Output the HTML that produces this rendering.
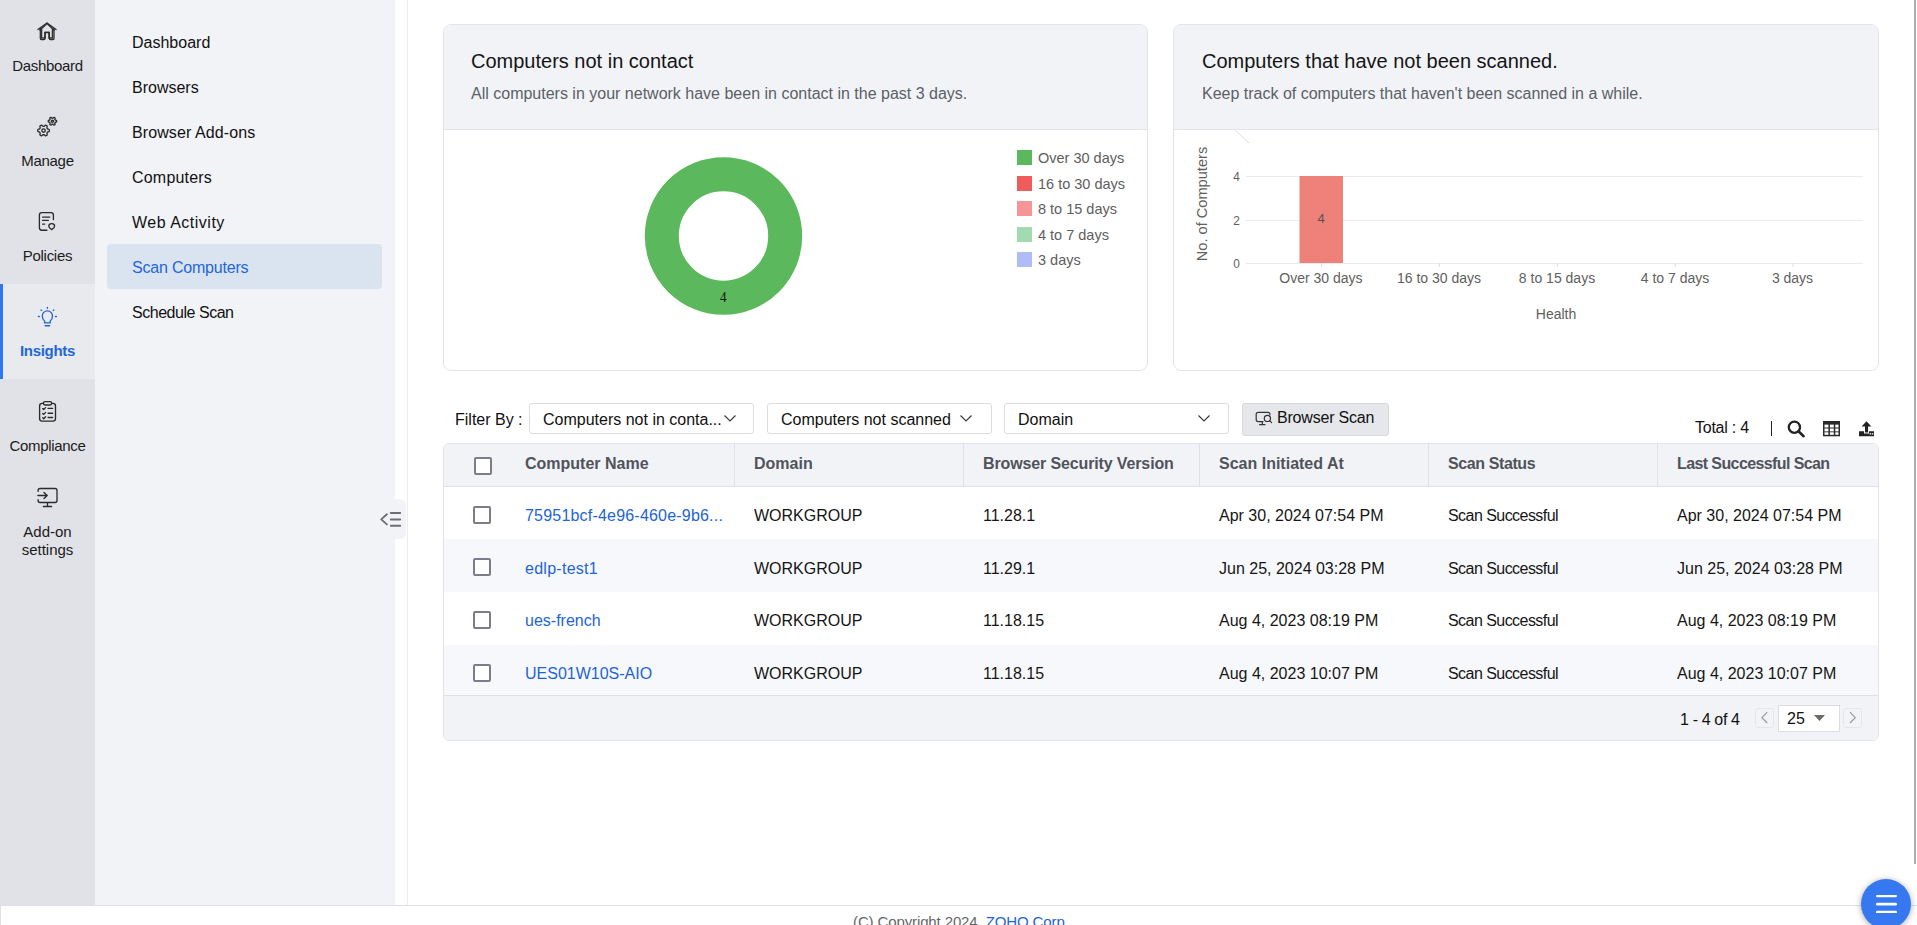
<!DOCTYPE html>
<html><head><meta charset="utf-8">
<style>
*{box-sizing:border-box;margin:0;padding:0}
html,body{width:1917px;height:925px;overflow:hidden;background:#fff;font-family:"Liberation Sans",sans-serif;color:#111}
.abs{position:absolute}
#rail{position:absolute;left:0;top:0;width:95px;height:905px;background:#e1e2e7}
.ri{position:absolute;left:0;width:95px;height:95px;text-align:center;font-size:15px;color:#1b1b1b}
.ri svg{position:absolute;left:37px;width:20px;height:20px}
.ri .lb{position:absolute;left:0;width:95px;text-align:center;line-height:18px;letter-spacing:-0.3px}
.ri.act{background:#e9eaee}
.ri.act:before{content:"";position:absolute;left:0;top:0;width:3px;height:95px;background:#2f76f0}
.ri.act .lb{color:#1f67d8;font-weight:bold}
#side{position:absolute;left:95px;top:0;width:300px;height:905px;background:#f2f3f7}
.mi{position:absolute;left:37px;font-size:16px;color:#111;line-height:20px}
#act{position:absolute;left:12px;top:244px;width:275px;height:45px;background:#dae4f0;border-radius:4px}
#vline{position:absolute;left:407px;top:0;width:1px;height:905px;background:#ececf0}
#collapse{position:absolute;left:379px;top:499px;width:27px;height:40px;background:#f2f3f7;border-radius:0 6px 6px 0}
.card{position:absolute;top:24px;height:347px;border:1px solid #e3e4e8;border-radius:8px;background:#fff;overflow:hidden}
.card .hd{position:absolute;left:0;top:0;right:0;height:105px;background:#f2f3f7;border-bottom:1px solid #e3e4e8}
.card .t{position:absolute;left:27px;top:25px;font-size:20px;color:#151515;white-space:nowrap}
.card .s{position:absolute;left:27px;top:60px;font-size:16px;color:#5b5f66;white-space:nowrap}
#footer{position:absolute;left:0;top:905px;width:1917px;height:20px;border-top:1px solid #dfe0e5;border-left:1px solid #dfe0e5;background:#fff}

.dd{position:absolute;top:403px;height:31px;border:1px solid #dcdde2;border-radius:3px;background:#fff;font-size:16px;color:#111;line-height:31px;padding-left:13px;white-space:nowrap}
.dd svg{position:absolute;top:9px}
#bscan{position:absolute;left:1242px;top:403px;width:147px;height:33px;background:#e6e7eb;border:1px solid #d6d7dc;border-radius:3px;font-size:16px;line-height:30px;color:#111}
#tbl{position:absolute;left:443px;top:443px;width:1436px;height:298px;border:1px solid #e3e4e8;border-radius:6px;overflow:hidden;background:#fff}
#th{position:absolute;left:0;top:0;width:100%;height:43px;background:#f2f3f7;border-bottom:1px solid #e0e1e6}
.hc{position:absolute;top:0;height:42px;line-height:40px;font-size:16px;font-weight:bold;color:#50535b;white-space:nowrap}
.cd{position:absolute;top:0;width:1px;height:42px;background:#e0e1e6}
.row{position:absolute;left:0;width:100%;height:53px}
.row.alt{background:#f7f8fb}
.c{position:absolute;top:2px;line-height:53px;font-size:16px;color:#151515;white-space:nowrap}
.c.lnk{color:#1d64d8}
.row.r2 .c{top:3px}
.cb{position:absolute;width:18px;height:18px;border:2px solid #7d7c8b;border-radius:2px;background:#fff}
#tf{position:absolute;left:0;top:251px;width:100%;height:45px;background:#f2f3f7;border-top:1px solid #e0e1e6}
</style></head><body>
<div id="rail">

  <div class="ri" style="top:0">
    <svg style="top:21px" viewBox="0 0 20 20" fill="none" stroke="#333" stroke-width="1.5"><path d="M2.5 9.5 L10 2.5 L17.5 9.5 M4.5 8 V17 H8 V11.5 H12 V17 H15.5 V8"/></svg>
    <div class="lb" style="top:57px">Dashboard</div>
  </div>
  <div class="ri" style="top:95px">
    <div class="lb" style="top:57px">Manage</div>
  </div>
  <div class="ri" style="top:190px">
    <div class="lb" style="top:57px">Policies</div>
  </div>
  <div class="ri act" style="top:284px">
    <div class="lb" style="top:58px">Insights</div>
  </div>
  <div class="ri" style="top:380px">
    <div class="lb" style="top:57px">Compliance</div>
  </div>
  <div class="ri" style="top:475px">
    <div class="lb" style="top:48px;letter-spacing:0">Add-on<br>settings</div>
  </div>
<svg class="abs" style="left:0;top:0" width="95" height="600" viewBox="0 0 95 600" fill="none" stroke="#2b2b2b" stroke-width="1.35" stroke-linecap="round" stroke-linejoin="round">
 <path stroke-width="1.25" d="M37.9 29.5 L47 22.9 L56.1 29.5 M40.3 28.2 V38.6 Q40.3 39.6 41.3 39.6 H44 Q45 39.6 45 38.6 V32.3 H49.4 V38.6 Q49.4 39.6 50.4 39.6 H53 Q54 39.6 54 38.6 V28.2"/>
 <path d="M49.35 130.50 L49.33 130.88 L49.25 131.25 L49.01 131.59 L48.38 131.79 L47.75 131.93 L47.48 132.13 L47.32 132.36 L47.19 132.60 L47.05 132.84 L46.92 133.09 L46.89 133.43 L47.09 134.04 L47.22 134.68 L47.05 135.06 L46.77 135.32 L46.45 135.52 L46.11 135.69 L45.75 135.81 L45.34 135.77 L44.84 135.33 L44.42 134.85 L44.10 134.71 L43.83 134.70 L43.55 134.70 L43.27 134.70 L43.00 134.71 L42.68 134.85 L42.26 135.33 L41.76 135.77 L41.35 135.81 L40.99 135.69 L40.65 135.52 L40.33 135.32 L40.05 135.06 L39.88 134.68 L40.01 134.04 L40.21 133.43 L40.18 133.09 L40.05 132.84 L39.91 132.60 L39.78 132.36 L39.62 132.13 L39.35 131.93 L38.72 131.79 L38.09 131.59 L37.85 131.25 L37.77 130.88 L37.75 130.50 L37.77 130.12 L37.85 129.75 L38.09 129.41 L38.72 129.21 L39.35 129.07 L39.62 128.87 L39.78 128.64 L39.91 128.40 L40.05 128.16 L40.18 127.91 L40.21 127.57 L40.01 126.96 L39.88 126.32 L40.05 125.94 L40.33 125.68 L40.65 125.48 L40.99 125.31 L41.35 125.19 L41.76 125.23 L42.26 125.67 L42.68 126.15 L43.00 126.29 L43.27 126.30 L43.55 126.30 L43.83 126.30 L44.10 126.29 L44.42 126.15 L44.84 125.67 L45.34 125.23 L45.75 125.19 L46.11 125.31 L46.45 125.48 L46.77 125.68 L47.05 125.94 L47.22 126.32 L47.09 126.96 L46.89 127.57 L46.92 127.91 L47.05 128.16 L47.19 128.40 L47.32 128.64 L47.48 128.87 L47.75 129.07 L48.38 129.21 L49.01 129.41 L49.25 129.75 L49.33 130.12Z"/><circle cx="43.55" cy="130.5" r="1.7"/>
 <path d="M56.65 121.20 L56.64 121.47 L56.58 121.74 L56.40 121.98 L55.93 122.13 L55.46 122.22 L55.26 122.36 L55.15 122.53 L55.05 122.70 L54.95 122.87 L54.86 123.05 L54.84 123.30 L55.00 123.75 L55.10 124.22 L54.98 124.50 L54.78 124.69 L54.55 124.84 L54.31 124.96 L54.04 125.05 L53.74 125.01 L53.38 124.68 L53.07 124.32 L52.85 124.21 L52.65 124.20 L52.45 124.20 L52.25 124.20 L52.05 124.21 L51.83 124.32 L51.52 124.68 L51.16 125.01 L50.86 125.05 L50.59 124.96 L50.35 124.84 L50.12 124.69 L49.92 124.50 L49.80 124.22 L49.90 123.75 L50.06 123.30 L50.04 123.05 L49.95 122.87 L49.85 122.70 L49.75 122.53 L49.64 122.36 L49.44 122.22 L48.97 122.13 L48.50 121.98 L48.32 121.74 L48.26 121.47 L48.25 121.20 L48.26 120.93 L48.32 120.66 L48.50 120.42 L48.97 120.27 L49.44 120.18 L49.64 120.04 L49.75 119.87 L49.85 119.70 L49.95 119.53 L50.04 119.35 L50.06 119.10 L49.90 118.65 L49.80 118.18 L49.92 117.90 L50.12 117.71 L50.35 117.56 L50.59 117.44 L50.86 117.35 L51.16 117.39 L51.52 117.72 L51.83 118.08 L52.05 118.19 L52.25 118.20 L52.45 118.20 L52.65 118.20 L52.85 118.19 L53.07 118.08 L53.38 117.72 L53.74 117.39 L54.04 117.35 L54.31 117.44 L54.55 117.56 L54.78 117.71 L54.98 117.90 L55.10 118.18 L55.00 118.65 L54.84 119.10 L54.86 119.35 L54.95 119.53 L55.05 119.70 L55.15 119.87 L55.26 120.04 L55.46 120.18 L55.93 120.27 L56.40 120.42 L56.58 120.66 L56.64 120.93Z"/><circle cx="52.45" cy="121.2" r="1.1"/>
 <path d="M53.4 219.6 V215 Q53.4 212.6 51 212.6 H41.8 Q39.4 212.6 39.4 215 V227.8 Q39.4 230.2 41.8 230.2 H46.9 M42.6 217.1 H49.8 M42.6 220.4 H48.3 M42.6 224.1 H44.7"/>
 <path d="M51.7 223.6 Q54.6 223.6 54.6 226 Q54.6 228 51.7 229.6 Q48.8 228 48.8 226 Q48.8 223.6 51.7 223.6Z"/>
 <g stroke="#2563d4"><path d="M44.6 322.9 V321 Q42.3 319.4 42.3 316 A5.1 5.1 0 0 1 52.5 316 Q52.5 319.4 50.2 321 V322.9 Z M45.2 325.7 H49.6 M47.4 307.4 V308.2 M38.4 316.5 H39.3 M55.5 316.5 H56.4 M41.0 310.0 L41.6 310.4 M53.9 310.0 L53.3 310.4"/></g>
 <rect x="39.6" y="403.3" width="15.9" height="17.8" rx="2.6"/><rect x="43.4" y="401.6" width="8.3" height="3.4" rx="1.7" fill="#e1e2e7"/>
 <path d="M42.7 408.6 L43.7 409.6 L45.6 407.6 M42.7 413.4 L43.7 414.4 L45.6 412.4 M42.7 417.7 L43.7 418.7 L45.6 416.7 M48.1 408.4 H52.6 M48.1 413.2 H52.6 M48.1 417.5 H52.6"/>
 <path d="M38.1 491.3 V490.5 Q38.1 488.5 40.1 488.5 H55 Q57 488.5 57 490.5 V500.5 Q57 502.5 55 502.5 H40.1 Q38.1 502.5 38.1 500.5 V499.7 M47.5 502.5 V506.5 M43.4 506.5 H51.6 M37.9 495.5 H47.2 M44 492.4 L47.2 495.5 L44 498.6"/>
</svg>
</div>
<div id="side">
  <div id="act"></div>
  <div class="mi" style="top:33px">Dashboard</div>
  <div class="mi" style="top:78px">Browsers</div>
  <div class="mi" style="top:123px;letter-spacing:0.1px">Browser Add-ons</div>
  <div class="mi" style="top:168px;letter-spacing:0.2px">Computers</div>
  <div class="mi" style="top:213px;letter-spacing:0.5px">Web Activity</div>
  <div class="mi" style="top:258px;color:#1f66dd;letter-spacing:-0.2px">Scan Computers</div>
  <div class="mi" style="top:303px;letter-spacing:-0.47px">Schedule Scan</div>
</div>
<div id="vline"></div>
<div id="collapse"><svg width="27" height="40" viewBox="0 0 27 40" fill="none" stroke="#6d6e75" stroke-width="1.9" stroke-linecap="round" stroke-linejoin="round"><path d="M7.9 15.3 L2.2 20.4 L7.9 25.4 M11.8 14 H21.2 M11.8 20.5 H21.2 M11.8 26.8 H21.2"/></svg></div>

<!-- CARDS -->
<div class="card" style="left:443px;width:705px">
  <div class="hd"><div class="t">Computers not in contact</div><div class="s">All computers in your network have been in contact in the past 3 days.</div></div>
</div>
<div class="card" style="left:1173px;width:706px">
  <div class="hd"><div class="t" style="left:28px">Computers that have not been scanned.</div><div class="s" style="left:28px">Keep track of computers that haven't been scanned in a while.</div></div>
</div>


<svg class="abs" style="left:443px;top:130px" width="705" height="240">
  <circle cx="280.5" cy="106" r="61.7" fill="none" stroke="#5cb85c" stroke-width="34"/>
  <text x="0" y="0" font-family="Liberation Serif" font-size="14.3" text-anchor="middle" fill="#111" transform="translate(280.2 171.8) scale(0.92 1)">4</text>
  <rect x="574" y="20" width="15" height="15" fill="#5cb85c"/>
  <rect x="574" y="46" width="15" height="15" fill="#f05b5b"/>
  <rect x="574" y="71" width="15" height="15" fill="#f59595"/>
  <rect x="574" y="97" width="15" height="15" fill="#a3dbb0"/>
  <rect x="574" y="122" width="15" height="15" fill="#b0bcf5"/>
  <g font-family="Liberation Sans" font-size="14.5" fill="#5e5e5e">
  <text x="595" y="32.5">Over 30 days</text>
  <text x="595" y="58.5">16 to 30 days</text>
  <text x="595" y="83.5">8 to 15 days</text>
  <text x="595" y="109.5">4 to 7 days</text>
  <text x="595" y="134.5">3 days</text>
  </g>
</svg>
<svg class="abs" style="left:1173px;top:130px" width="706" height="240">
  <path d="M62 0 L76 13" stroke="#ddd" stroke-width="1"/>
  <g stroke="#ebebeb" stroke-width="1">
  <line x1="73" y1="46.5" x2="690" y2="46.5"/>
  <line x1="73" y1="90.5" x2="690" y2="90.5"/>
  <line x1="73" y1="133.5" x2="690" y2="133.5"/>
  </g>
  <g stroke="#ddd"><line x1="148.5" y1="133" x2="148.5" y2="137"/><line x1="266.4" y1="133" x2="266.4" y2="137"/><line x1="384.3" y1="133" x2="384.3" y2="137"/><line x1="502.2" y1="133" x2="502.2" y2="137"/><line x1="620.1" y1="133" x2="620.1" y2="137"/></g>
  <rect x="126.5" y="46" width="43.5" height="87" fill="#ef817b"/>
  <g font-family="Liberation Sans" font-size="13.5" fill="#606060" text-anchor="end">
  <text x="67" y="51" transform="translate(67 0) scale(0.88 1) translate(-67 0)">4</text><text x="67" y="95" transform="translate(67 0) scale(0.88 1) translate(-67 0)">2</text><text x="67" y="138" transform="translate(67 0) scale(0.88 1) translate(-67 0)">0</text>
  </g>
  <text x="148" y="93" font-family="Liberation Sans" font-size="13" fill="#555" text-anchor="middle">4</text>
  <g font-family="Liberation Sans" font-size="14" fill="#606060" text-anchor="middle">
  <text x="148" y="153">Over 30 days</text>
  <text x="266" y="153">16 to 30 days</text>
  <text x="384" y="153">8 to 15 days</text>
  <text x="502" y="153">4 to 7 days</text>
  <text x="619.5" y="153">3 days</text>
  <text x="383" y="189">Health</text>
  <text transform="translate(34.3,74) rotate(-90)" font-size="14.6">No. of Computers</text>
  </g>
</svg>

<div id="footer"></div>
<div class="abs" style="left:455px;top:410px;font-size:16px;line-height:20px;color:#111">Filter By :</div>
<div class="dd" style="left:529px;width:225px">Computers not in conta...<svg style="left:193px" width="14" height="10" viewBox="0 0 14 10" fill="none" stroke="#3a3a3a" stroke-width="1.15"><path d="M1.5 2.5 L7 8 L12.5 2.5"/></svg></div>
<div class="dd" style="left:767px;width:225px">Computers not scanned<svg style="left:191px" width="14" height="10" viewBox="0 0 14 10" fill="none" stroke="#3a3a3a" stroke-width="1.15"><path d="M1.5 2.5 L7 8 L12.5 2.5"/></svg></div>
<div class="dd" style="left:1004px;width:225px">Domain<svg style="left:192px" width="14" height="10" viewBox="0 0 14 10" fill="none" stroke="#3a3a3a" stroke-width="1.15"><path d="M1.5 2.5 L7 8 L12.5 2.5"/></svg></div>
<div id="bscan"><svg class="abs" style="left:0;top:0" width="40" height="31" viewBox="0 0 40 31" fill="none" stroke="#333" stroke-width="1.2" stroke-linecap="round"><path d="M20 17.6 H15.2 Q13.2 17.6 13.2 15.6 V10.3 Q13.2 8.3 15.2 8.3 H25 Q26.9 8.3 26.9 10.3 V10.8 M19.3 17.6 V20.7 M16.6 20.7 H22"/><circle cx="24.4" cy="14.4" r="3.1"/><path d="M26.6 16.6 L28.6 18.6"/></svg><span class="abs" style="left:34px;top:-1px;letter-spacing:-0.2px">Browser Scan</span></div>
<div class="abs" style="left:1695px;top:418px;font-size:16px;line-height:20px;color:#111;letter-spacing:-0.25px">Total : 4</div>
<div class="abs" style="left:1771px;top:421px;width:1.4px;height:15px;background:#222"></div>
<svg class="abs" style="left:1780px;top:414px" width="100" height="28" viewBox="1780 414 100 28">
 <circle cx="1794.4" cy="427.2" r="5.6" fill="none" stroke="#222" stroke-width="2.3"/><path d="M1798.5 431.3 L1803.6 436.2" stroke="#222" stroke-width="2.6" stroke-linecap="round"/>
 <rect x="1823" y="421" width="17" height="15.3" fill="#2a2a2a"/>
 <g fill="#fff"><rect x="1824.5" y="424.6" width="3.9" height="2.9"/><rect x="1829.9" y="424.6" width="3.9" height="2.9"/><rect x="1835.3" y="424.6" width="3.2" height="2.9"/>
 <rect x="1824.5" y="428.5" width="3.9" height="2.9"/><rect x="1829.9" y="428.5" width="3.9" height="2.9"/><rect x="1835.3" y="428.5" width="3.2" height="2.9"/>
 <rect x="1824.5" y="432.3" width="3.9" height="2.5"/><rect x="1829.9" y="432.3" width="3.9" height="2.5"/><rect x="1835.3" y="432.3" width="3.2" height="2.5"/></g>
 <path d="M1866.5 421.2 L1871.4 426.6 H1868.1 V432.5 H1865 V426.6 H1861.6z" fill="#222"/>
 <path d="M1859 431.2 H1864 V433.4 H1869 V431.2 H1874 V436.3 H1859z" fill="#222"/><rect x="1869.6" y="433.2" width="1.5" height="1.3" fill="#fff"/><rect x="1871.8" y="433.2" width="1.5" height="1.3" fill="#fff"/>
</svg>
<div id="tbl">
 <div id="th">
  <div class="cb" style="left:30px;top:13px"></div>
  <div class="hc" style="left:81px">Computer Name</div>
  <div class="cd" style="left:290px"></div>
  <div class="hc" style="left:310px">Domain</div>
  <div class="cd" style="left:519px"></div>
  <div class="hc" style="left:539px;letter-spacing:-0.13px">Browser Security Version</div>
  <div class="cd" style="left:755px"></div>
  <div class="hc" style="left:775px">Scan Initiated At</div>
  <div class="cd" style="left:984px"></div>
  <div class="hc" style="left:1004px;letter-spacing:-0.4px">Scan Status</div>
  <div class="cd" style="left:1213px"></div>
  <div class="hc" style="left:1233px;letter-spacing:-0.6px">Last Successful Scan</div>
 </div>
 <div class="row" style="top:43px;height:52px">
  <div class="cb" style="left:29px;top:19px"></div>
  <div class="c lnk" style="left:81px;letter-spacing:0.2px">75951bcf-4e96-460e-9b6...</div>
  <div class="c" style="left:310px">WORKGROUP</div>
  <div class="c" style="left:539px">11.28.1</div>
  <div class="c" style="left:775px">Apr 30, 2024 07:54 PM</div>
  <div class="c" style="left:1004px;letter-spacing:-0.55px">Scan Successful</div>
  <div class="c" style="left:1233px">Apr 30, 2024 07:54 PM</div>
 </div>
 <div class="row alt r2" style="top:95px;height:53px">
  <div class="cb" style="left:29px;top:19px"></div>
  <div class="c lnk" style="left:81px;letter-spacing:0.27px">edlp-test1</div>
  <div class="c" style="left:310px">WORKGROUP</div>
  <div class="c" style="left:539px">11.29.1</div>
  <div class="c" style="left:775px">Jun 25, 2024 03:28 PM</div>
  <div class="c" style="left:1004px;letter-spacing:-0.55px">Scan Successful</div>
  <div class="c" style="left:1233px">Jun 25, 2024 03:28 PM</div>
 </div>
 <div class="row" style="top:148px;height:53px">
  <div class="cb" style="left:29px;top:19px"></div>
  <div class="c lnk" style="left:81px">ues-french</div>
  <div class="c" style="left:310px">WORKGROUP</div>
  <div class="c" style="left:539px">11.18.15</div>
  <div class="c" style="left:775px">Aug 4, 2023 08:19 PM</div>
  <div class="c" style="left:1004px;letter-spacing:-0.55px">Scan Successful</div>
  <div class="c" style="left:1233px">Aug 4, 2023 08:19 PM</div>
 </div>
 <div class="row alt" style="top:201px;height:50px">
  <div class="cb" style="left:29px;top:19px"></div>
  <div class="c lnk" style="left:81px">UES01W10S-AIO</div>
  <div class="c" style="left:310px">WORKGROUP</div>
  <div class="c" style="left:539px">11.18.15</div>
  <div class="c" style="left:775px">Aug 4, 2023 10:07 PM</div>
  <div class="c" style="left:1004px;letter-spacing:-0.55px">Scan Successful</div>
  <div class="c" style="left:1233px">Aug 4, 2023 10:07 PM</div>
 </div>

 <div id="tf">
  <div class="abs" style="left:1236px;top:14px;font-size:16px;line-height:20px;color:#111;letter-spacing:-0.35px">1 - 4 of 4</div>
  <div class="abs" style="left:1311px;top:12px;width:19px;height:20px;border:1px solid #e6e7eb;border-radius:3px"><svg class="abs" style="left:0;top:0" width="17" height="18" viewBox="0 0 17 18" fill="none" stroke="#9a9aa0" stroke-width="1.2"><path d="M11.2 3.2 L6 8.7 L11.2 14"/></svg></div>
  <div class="abs" style="left:1334px;top:9px;width:62px;height:27px;border:1px solid #dcdde2;background:#fff;font-size:16px;line-height:25px;padding-left:8px;color:#111">25<svg class="abs" style="left:35px;top:9px" width="11" height="7" viewBox="0 0 11 7" fill="#6a6a6a"><path d="M0 0 H11 L5.5 6z"/></svg></div>
  <div class="abs" style="left:1399px;top:12px;width:19px;height:20px;border:1px solid #e6e7eb;border-radius:3px"><svg class="abs" style="left:0;top:0" width="17" height="18" viewBox="0 0 17 18" fill="none" stroke="#9a9aa0" stroke-width="1.2"><path d="M6 3.2 L11.2 8.7 L6 14"/></svg></div>
 </div>
</div>
<div class="abs" style="left:853px;top:913px;font-size:15px;line-height:18px;color:#666;letter-spacing:-0.12px">(C) Copyright 2024, <span style="color:#1d64d8">ZOHO Corp.</span></div>
<div class="abs" style="left:1861px;top:879px;width:50px;height:50px;border-radius:50%;background:#3578f0;box-shadow:0 1px 6px rgba(0,0,0,.35)"><svg class="abs" style="left:15px;top:14px" width="22" height="20" viewBox="0 0 22 20" fill="#fff"><rect x="0" y="2" width="21" height="2.2" rx="1.1"/><rect x="0" y="9.8" width="21" height="2.8" rx="1.4"/><rect x="0" y="17.8" width="21" height="2.8" rx="1.4"/></svg></div>
<div class="abs" style="left:1914px;top:0;width:2px;height:864px;background:#adadad"></div>

</body></html>
